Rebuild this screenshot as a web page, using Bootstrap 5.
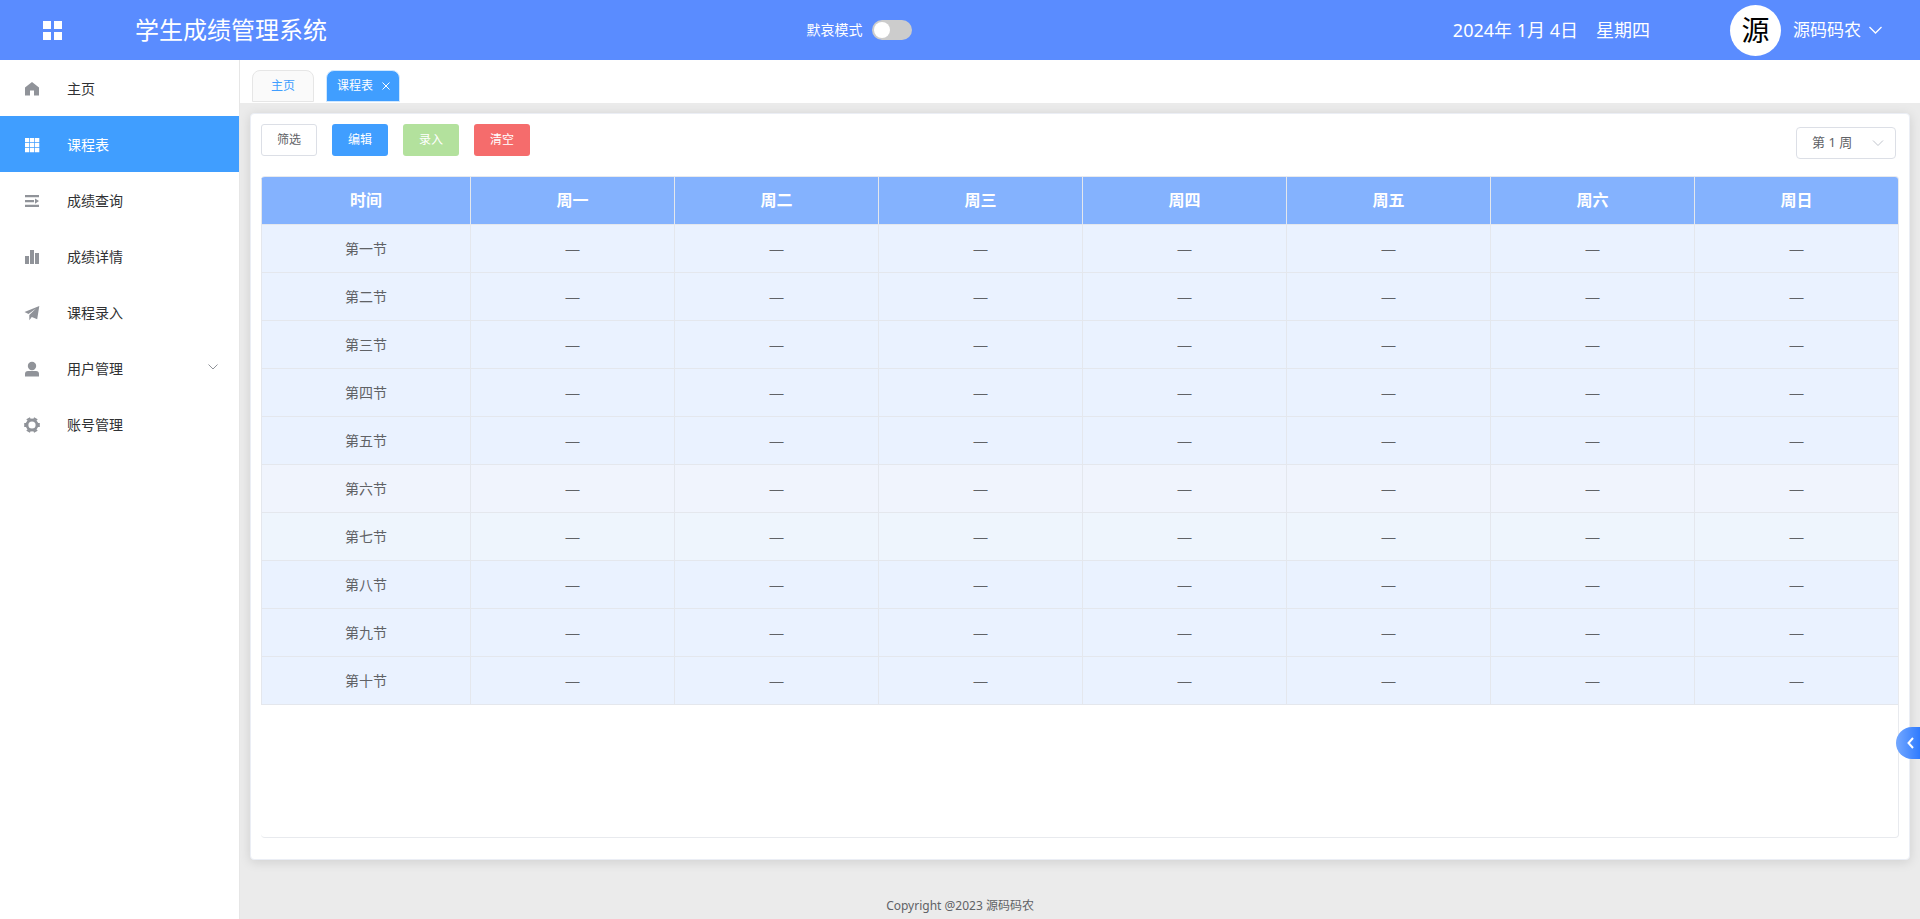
<!DOCTYPE html>
<html lang="zh-CN">
<head>
<meta charset="utf-8">
<meta name="viewport" content="width=device-width, initial-scale=1">
<title>学生成绩管理系统</title>
<link href="https://cdn.jsdelivr.net/npm/bootstrap@5.3.0/dist/css/bootstrap.min.css" rel="stylesheet">
<style>
  body { font-family: "Noto Sans", "Noto Sans CJK SC", sans-serif; font-size: 14px; line-height: 20px; color: #606266; background: #ebebeb; }
  svg { display: block; flex: none; }

  .top-bar { height: 60px; background: #5a8cff; }
  .top-left { flex: 0 0 42%; padding-left: 43px; gap: 73px; }
  .brand { font-size: 24px; line-height: 32px; }
  .mode-box { gap: 10px; }
  .top-text { font-size: 18px; line-height: 24px; }
  .top-date { gap: 18px; margin-right: 80px; }
  .user-btn { font-size: 17px; line-height: 24px; gap: 8px; }
  .avatar { width: 51px; height: 51px; margin-right: 12px; font-size: 28px; line-height: 51px; color: #000; }
  .top-right { padding-right: 38px; }
  .mode-switch.form-check-input { width: 40px; height: 20px; margin: 0; border: 0; background-color: #ccc; background-size: 20px 20px;
    --bs-form-switch-bg: url("data:image/svg+xml,%3csvg xmlns='http://www.w3.org/2000/svg' viewBox='-10 -10 20 20'%3e%3ccircle r='8' fill='%23fff'/%3e%3c/svg%3e"); }

  .side { flex: 0 0 240px; border-right: 1px solid #e6e6e6; }
  .side-link { height: 56px; padding: 2px 21px 0 23px; gap: 26px; color: #303133; border-radius: 0; }
  .side-link svg { color: #909399; }
  .side-link:hover { color: #409eff; }
  .side-link.active, .side-link.active svg { color: #fff; background: #409eff; }

  .tab-strip { padding: 10px 12px 1px; gap: 12px; }
  .page-tab { height: 32px; padding: 0 9px 0 10px; gap: 9px; font-size: 12px; color: #409eff; background: #fafafa; border: 1px solid #e6e6e6; border-radius: 8px 8px 0 0; }
  .page-tab.home { padding: 0 18px; }
  .page-tab.active { color: #fff; background: #409eff; border-color: #d0e8ff; }
  .page-tab button { color: inherit; }

  .panel { margin: 10px; padding: 10px 10px 21px; border: 1px solid #ebeef5; border-radius: 4px; box-shadow: 0 2px 12px rgba(0, 0, 0, .12); }
  .tool-row { gap: 15px; }
  .tool-btn { width: 56px; height: 32px; padding: 0; font-size: 12px; line-height: 18px; border-radius: 3px; color: #fff; border: 0; }
  .tool-btn.plain { color: #606266; border: 1px solid #dcdfe6; }
  .tool-btn.edit { background: #409eff; }
  .tool-btn.enter, .tool-btn.enter:disabled { background: #b3e19d; color: #fff; opacity: 1; }
  .tool-btn.clear { background: #f56c6c; }
  .week-select.form-select { width: 100px; height: 32px; margin: 3px 3px 0 0; padding: 0 30px 2px 15px; font-size: 13px; line-height: 20px; color: #606266; border-color: #dcdfe6; border-radius: 4px;
    background-image: url("data:image/svg+xml,%3csvg xmlns='http://www.w3.org/2000/svg' viewBox='0 0 12 12'%3e%3cpath d='M1 3.5l5 5 5-5' fill='none' stroke='%23c0c4cc'/%3e%3c/svg%3e"); background-size: 12px 12px; background-position: right 11px center; }

  .grid-wrap { margin-top: 17px; border: 1px solid #e8eaee; border-left: 0; border-radius: 4px; overflow: hidden; }
  .timetable { table-layout: fixed; width: calc(100% + 1px); border-collapse: separate; border-spacing: 0; text-align: center; }
  .timetable th, .timetable td { height: 48px; padding: 0; border: 0 solid #e4e7ed; border-width: 0 1px 1px 0; vertical-align: middle; font-weight: 400; background: #eaf2ff; }
  .timetable td { font-family: "Liberation Sans", sans-serif; }
  .timetable tr > :first-child { border-left-width: 1px; }
  .timetable thead th { padding-bottom: 2px; font-size: 16px; font-weight: 700; color: #fff; background: #84b2fe; }
  .timetable .noon > * { background: #f0f4fd; }
  .timetable .hovered > * { background: #eef5fd; }
  .col-time { width: 210px; }

  /* the copyright line is centred on the window, so it gives back the menu's width */
  .foot { padding: 36px 240px 3px 0; font-size: 12px; line-height: 20px; }
  .drawer-btn { right: 0; bottom: 160px; width: 24px; height: 32px; border: 0; padding: 0 6px 0 10px; border-radius: 16px 0 0 16px; background: linear-gradient(90deg, #74a8ff, #2f7bff); color: #fff; }
</style>
</head>
<body class="d-flex flex-column min-vh-100">

<header class="top-bar d-flex align-items-center text-white">
  <div class="top-left d-flex align-items-center">
    <button type="button" class="btn p-0 border-0 text-white" aria-label="菜单">
      <svg width="19" height="19" viewBox="0 0 19 19" fill="currentColor"><path d="M0 0h8v8H0zM11 0h8v8h-8zM0 11h8v8H0zM11 11h8v8h-8z"/></svg>
    </button>
    <h1 class="brand fw-normal m-0">学生成绩管理系统</h1>
  </div>
  <div class="mode-box form-switch d-flex align-items-center p-0 m-0">
    <label for="mode">默哀模式</label>
    <input class="form-check-input mode-switch" type="checkbox" role="switch" id="mode">
  </div>
  <div class="top-right d-flex align-items-center ms-auto">
    <div class="top-date top-text d-flex"><span>2024年 1月 4日</span><span>星期四</span></div>
    <div class="avatar rounded-circle bg-white text-center">源</div>
    <button type="button" class="btn user-btn p-0 border-0 text-white d-flex align-items-center">源码码农
      <svg width="13" height="8" viewBox="0 0 13 8" fill="none" stroke="currentColor" stroke-width="1.3"><path d="M.5 1l6 6 6-6"/></svg>
    </button>
  </div>
</header>

<div class="d-flex flex-grow-1">
  <nav class="side bg-white">
    <ul class="nav flex-column">
      <li><a href="#" class="side-link nav-link d-flex align-items-center">
        <svg width="18" height="18" viewBox="0 0 18 18" fill="currentColor"><path d="M9 2L2 7.500V15.500h5v-5h4v5h5V7.500z"/></svg>主页</a></li>
      <li><a href="#" class="side-link nav-link d-flex align-items-center active" aria-current="page">
        <svg width="18" height="18" viewBox="0 0 18 18" fill="currentColor"><path d="M2 2h4.300v4.300H2zM7 2h4.300v4.300H7zM12 2h4.300v4.300H12zM2 7h4.300v4.300H2zM7 7h4.300v4.300H7zM12 7h4.300v4.300H12zM2 12h4.300v4.300H2zM7 12h4.300v4.300H7zM12 12h4.300v4.300H12z"/></svg>课程表</a></li>
      <li><a href="#" class="side-link nav-link d-flex align-items-center">
        <svg width="18" height="18" viewBox="0 0 18 18" fill="currentColor"><path d="M2 3h14v2.300H2zM2 8h9v2.300H2zM2 12.700h14V15H2zM12 6.500l4 2.600-4 2.600z"/></svg>成绩查询</a></li>
      <li><a href="#" class="side-link nav-link d-flex align-items-center">
        <svg width="18" height="18" viewBox="0 0 18 18" fill="currentColor"><path d="M2 8h4v8H2zM7 2h4v14H7zM12 5h4v11h-4z"/></svg>成绩详情</a></li>
      <li><a href="#" class="side-link nav-link d-flex align-items-center">
        <svg width="18" height="18" viewBox="0 0 18 18" fill="currentColor"><path d="M16.300 2L1.500 8l4 2L13 4.500 6.300 11v5.200l2.500-3.300 5.400 2.300z"/></svg>课程录入</a></li>
      <li><a href="#" class="side-link nav-link d-flex align-items-center">
        <svg width="18" height="18" viewBox="0 0 18 18" fill="currentColor"><circle cx="9" cy="6" r="4.200"/><path d="M2 16.500V14a3 3 0 013-3h8a3 3 0 013 3v2.500z"/></svg>用户管理
        <svg class="ms-auto mb-1" width="10" height="6" viewBox="0 0 10 6" fill="none" stroke="currentColor"><path d="M.5.5L5 5 9.500.5"/></svg></a></li>
      <li><a href="#" class="side-link nav-link d-flex align-items-center">
        <svg width="18" height="18" viewBox="0 0 18 18" fill="none" stroke="currentColor"><circle cx="9" cy="9" r="5" stroke-width="2.800"/><path stroke-width="4" d="M1.200 9h1.800M15 9h1.800M5.100 2.200l.9 1.600M12 14.200l.9 1.600M12.900 2.200l-.9 1.600M6 14.200l-.9 1.600"/></svg>账号管理</a></li>
    </ul>
  </nav>

  <main class="d-flex flex-column flex-grow-1">
    <div class="tab-strip d-flex bg-white">
      <a href="#" class="page-tab home d-flex align-items-center text-decoration-none">主页</a>
      <div class="page-tab active d-flex align-items-center"><span>课程表</span>
        <button type="button" class="btn p-0 border-0" aria-label="关闭"><svg width="8" height="8" viewBox="0 0 8 8" fill="none" stroke="currentColor"><path d="M.5.5l7 7M7.500.5l-7 7"/></svg></button>
      </div>
    </div>

    <section class="panel bg-white d-flex flex-column flex-grow-1 mb-0">
      <div class="d-flex align-items-start justify-content-between">
        <div class="tool-row d-flex">
          <button type="button" class="btn tool-btn plain">筛选</button>
          <button type="button" class="btn tool-btn edit">编辑</button>
          <button type="button" class="btn tool-btn enter" disabled>录入</button>
          <button type="button" class="btn tool-btn clear">清空</button>
        </div>
        <select class="form-select week-select" aria-label="周次"><option>第 1 周</option><option>第 2 周</option><option>第 3 周</option></select>
      </div>

      <div class="grid-wrap flex-grow-1">
        <table class="timetable">
          <colgroup><col class="col-time"><col span="7"></colgroup>
          <thead><tr><th scope="col">时间</th><th scope="col">周一</th><th scope="col">周二</th><th scope="col">周三</th><th scope="col">周四</th><th scope="col">周五</th><th scope="col">周六</th><th scope="col">周日</th></tr></thead>
          <tbody>
            <tr><th scope="row">第一节</th><td>—</td><td>—</td><td>—</td><td>—</td><td>—</td><td>—</td><td>—</td></tr>
            <tr><th scope="row">第二节</th><td>—</td><td>—</td><td>—</td><td>—</td><td>—</td><td>—</td><td>—</td></tr>
            <tr><th scope="row">第三节</th><td>—</td><td>—</td><td>—</td><td>—</td><td>—</td><td>—</td><td>—</td></tr>
            <tr><th scope="row">第四节</th><td>—</td><td>—</td><td>—</td><td>—</td><td>—</td><td>—</td><td>—</td></tr>
            <tr><th scope="row">第五节</th><td>—</td><td>—</td><td>—</td><td>—</td><td>—</td><td>—</td><td>—</td></tr>
            <tr class="noon"><th scope="row">第六节</th><td>—</td><td>—</td><td>—</td><td>—</td><td>—</td><td>—</td><td>—</td></tr>
            <tr class="hovered"><th scope="row">第七节</th><td>—</td><td>—</td><td>—</td><td>—</td><td>—</td><td>—</td><td>—</td></tr>
            <tr><th scope="row">第八节</th><td>—</td><td>—</td><td>—</td><td>—</td><td>—</td><td>—</td><td>—</td></tr>
            <tr><th scope="row">第九节</th><td>—</td><td>—</td><td>—</td><td>—</td><td>—</td><td>—</td><td>—</td></tr>
            <tr><th scope="row">第十节</th><td>—</td><td>—</td><td>—</td><td>—</td><td>—</td><td>—</td><td>—</td></tr>
          </tbody>
        </table>
      </div>
    </section>

    <footer class="foot text-center">Copyright @2023 源码码农</footer>
  </main>
</div>

<button type="button" class="drawer-btn position-fixed d-flex align-items-center justify-content-center" aria-label="展开">
  <svg width="7" height="12" viewBox="0 0 7 12" fill="none" stroke="currentColor" stroke-width="2"><path d="M6 1L1.500 6 6 11"/></svg>
</button>

<script src="https://cdn.jsdelivr.net/npm/bootstrap@5.3.0/dist/js/bootstrap.bundle.min.js"></script>
</body>
</html>
